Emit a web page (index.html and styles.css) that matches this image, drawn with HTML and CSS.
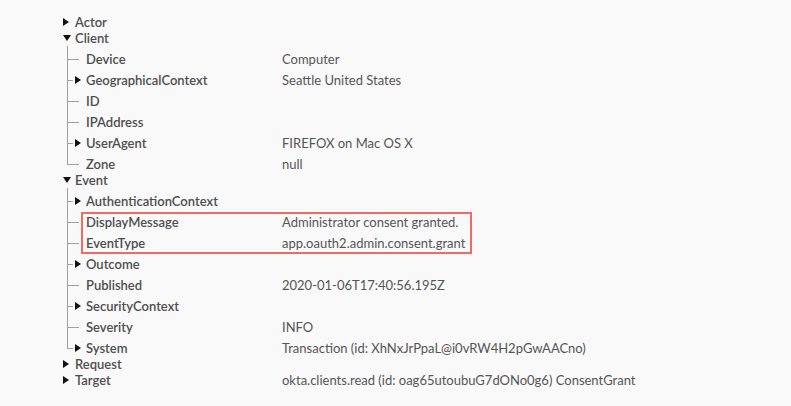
FILE: index.html
```html
<!DOCTYPE html>
<html>
<head>
<meta charset="utf-8">
<link rel="stylesheet" href="styles.css">
</head>
<body>
<div class="tree">
  <div class="node top">
    <div class="row"><span class="tog"><svg class="tri" width="6" height="8" viewBox="0 0 6 8"><path d="M0 0L6 4L0 8Z"/></svg></span><span class="key">Actor</span></div>
  </div>
  <div class="node top">
    <div class="row"><span class="tog"><svg class="tri" width="8" height="6" viewBox="0 0 8 6"><path d="M0 0L8 0L4 6Z"/></svg></span><span class="key">Client</span></div>
    <div class="kids">
      <div class="kid"><div class="row"><span class="tog"></span><span class="key">Device</span><span class="val">Computer</span></div></div>
      <div class="kid branch"><div class="row"><span class="tog"><svg class="tri" width="6" height="8" viewBox="0 0 6 8"><path d="M0 0L6 4L0 8Z"/></svg></span><span class="key">GeographicalContext</span><span class="val">Seattle United States</span></div></div>
      <div class="kid"><div class="row"><span class="tog"></span><span class="key">ID</span><span class="val"></span></div></div>
      <div class="kid"><div class="row"><span class="tog"></span><span class="key">IPAddress</span><span class="val"></span></div></div>
      <div class="kid branch"><div class="row"><span class="tog"><svg class="tri" width="6" height="8" viewBox="0 0 6 8"><path d="M0 0L6 4L0 8Z"/></svg></span><span class="key">UserAgent</span><span class="val">FIREFOX on Mac OS X</span></div></div>
      <div class="kid last"><div class="row"><span class="tog"></span><span class="key">Zone</span><span class="val">null</span></div></div>
    </div>
  </div>
  <div class="node top">
    <div class="row"><span class="tog"><svg class="tri" width="8" height="6" viewBox="0 0 8 6"><path d="M0 0L8 0L4 6Z"/></svg></span><span class="key">Event</span></div>
    <div class="kids">
      <div class="kid branch"><div class="row"><span class="tog"><svg class="tri" width="6" height="8" viewBox="0 0 6 8"><path d="M0 0L6 4L0 8Z"/></svg></span><span class="key">AuthenticationContext</span><span class="val"></span></div></div>
      <div class="hl">
        <div class="kid"><div class="row"><span class="tog"></span><span class="key">DisplayMessage</span><span class="val">Administrator consent granted.</span></div></div>
        <div class="kid"><div class="row"><span class="tog"></span><span class="key">EventType</span><span class="val">app.oauth2.admin.consent.grant</span></div></div>
      </div>
      <div class="kid branch"><div class="row"><span class="tog"><svg class="tri" width="6" height="8" viewBox="0 0 6 8"><path d="M0 0L6 4L0 8Z"/></svg></span><span class="key">Outcome</span><span class="val"></span></div></div>
      <div class="kid"><div class="row"><span class="tog"></span><span class="key">Published</span><span class="val">2020-01-06T17:40:56.195Z</span></div></div>
      <div class="kid branch"><div class="row"><span class="tog"><svg class="tri" width="6" height="8" viewBox="0 0 6 8"><path d="M0 0L6 4L0 8Z"/></svg></span><span class="key">SecurityContext</span><span class="val"></span></div></div>
      <div class="kid"><div class="row"><span class="tog"></span><span class="key">Severity</span><span class="val">INFO</span></div></div>
      <div class="kid branch last"><div class="row"><span class="tog"><svg class="tri" width="6" height="8" viewBox="0 0 6 8"><path d="M0 0L6 4L0 8Z"/></svg></span><span class="key">System</span><span class="val">Transaction (id: XhNxJrPpaL@i0vRW4H2pGwAACno)</span></div></div>
    </div>
  </div>
  <div class="node top">
    <div class="row"><span class="tog"><svg class="tri" width="6" height="8" viewBox="0 0 6 8"><path d="M0 0L6 4L0 8Z"/></svg></span><span class="key">Request</span></div>
  </div>
  <div class="node top">
    <div class="row"><span class="tog"><svg class="tri" width="6" height="8" viewBox="0 0 6 8"><path d="M0 0L6 4L0 8Z"/></svg></span><span class="key">Target</span><span class="val">okta.clients.read (id: oag65utoubuG7dONo0g6) ConsentGrant</span></div>
  </div>
</div>
</body>
</html>
```
FILE: styles.css
```css
html, body {
  margin: 0;
  background: #f9f9f9;
}
body {
  font-family: Lato, "Open Sans", sans-serif;
  font-size: 13px;
  color: #555;
}
.tree {
  padding: 14px 0 0 63px;
}
.row {
  display: flex;
  align-items: center;
  height: 16px;
  line-height: 16px;
  white-space: nowrap;
}
.tog {
  flex: none;
  width: 12px;
  display: flex;
  align-items: center;
}
.tri {
  display: block;
  fill: #111;
}
.key {
  flex: none;
  width: 207px;
  font-weight: 600;
  color: #4e4e4e;
}
.val {
  color: #555;
}
.kids {
  margin-left: 4px;
}
.kid {
  position: relative;
  padding-left: 8px;
}
.kid::before {
  content: "";
  position: absolute;
  left: 0;
  top: 0;
  bottom: 0;
  border-left: 1px solid #a0a0a0;
}
.kid.last::before {
  bottom: auto;
  height: 13px;
}
.kid::after {
  content: "";
  position: absolute;
  left: 0;
  top: 13px;
  width: 12px;
  border-top: 1px solid #a0a0a0;
}
.kid.branch::after {
  width: 6px;
}
.kid > .row {
  height: 21px;
  padding-top: 5px;
  box-sizing: border-box;
}
.kid .tog {
  width: 11px;
}
.kid .key {
  width: 196px;
}
.hl {
  position: relative;
}
.hl::after {
  content: "";
  position: absolute;
  left: 14px;
  top: 3px;
  bottom: -3px;
  width: 391px;
  box-sizing: border-box;
  border: 2px solid #f26a62;
  pointer-events: none;
}
```
